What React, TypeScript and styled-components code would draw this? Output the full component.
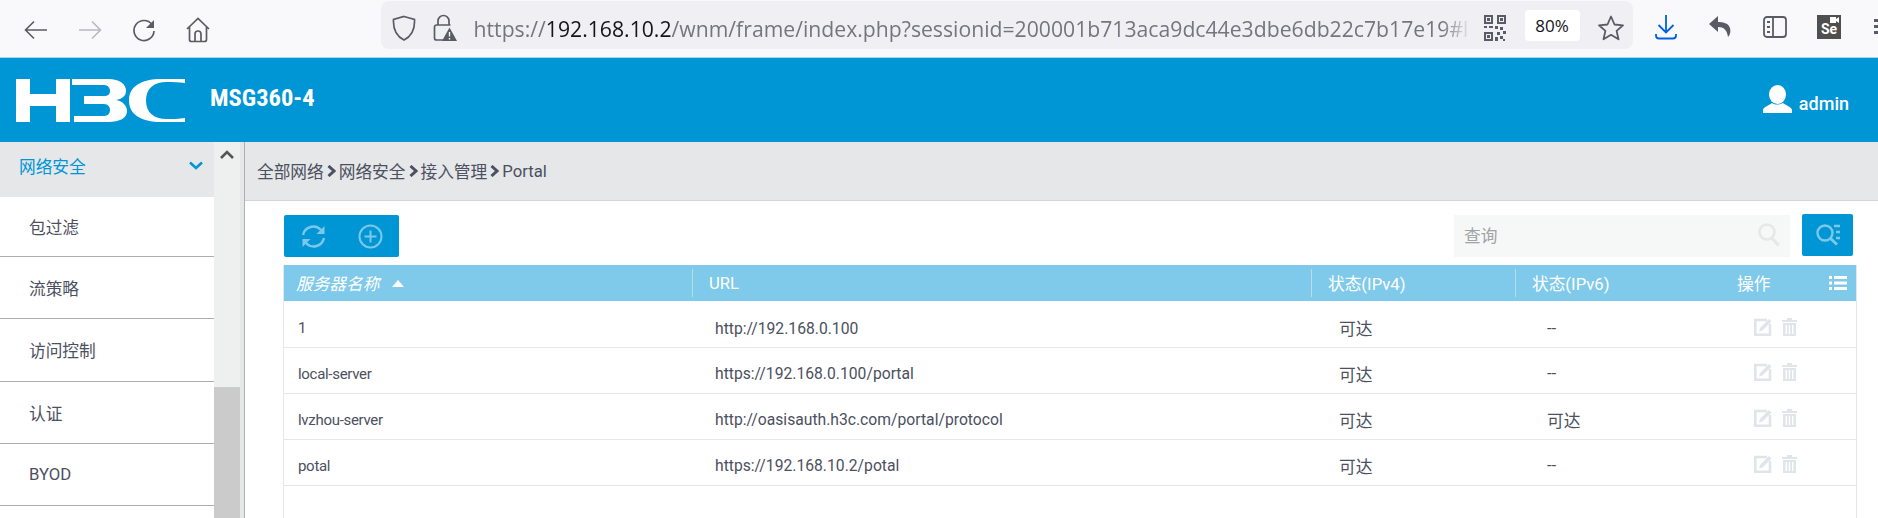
import styled, { createGlobalStyle } from "styled-components";

const GlobalStyle = createGlobalStyle`
  html, body {
    margin: 0;
    padding: 0;
    background: #fff;
    overflow: hidden;
  }
  * {
    box-sizing: border-box;
  }
`;

const uiFont = `"Roboto", "Noto Sans CJK SC", sans-serif`;

const menu = ["包过滤", "流策略", "访问控制", "认证", "BYOD"];
const crumbs = ["全部网络", "网络安全", "接入管理", "Portal"];
const servers = [
  { name: "1", url: "http://192.168.0.100", v4: "可达", v6: "--" },
  { name: "local-server", url: "https://192.168.0.100/portal", v4: "可达", v6: "--" },
  { name: "lvzhou-server", url: "http://oasisauth.h3c.com/portal/protocol", v4: "可达", v6: "可达" },
  { name: "potal", url: "https://192.168.10.2/potal", v4: "可达", v6: "--" },
];

function Logo() {
  return (
    <svg width="169" height="43" viewBox="0 0 169 43" fill="#fff" style={{ flex: "none" }}>
      <path d="M0 0h14v15h26V0h14v43H40V27H14v16H0z" />
      <path d="M56 0h36c12 0 18 5 18 12 0 5-4 8-10 9 6 1 11 5 11 11 0 7-7 11-19 11H58v-6h30c4 0 6-3 6-6s-2-6-6-6H68v-8h20c4 0 6-2 6-5s-2-6-6-6H56z" />
      <path d="M169 0h-23c-22 0-33 8-33 21.500S124 43 146 43h23v-4c-6 1-12 1-18 1-14 0-21-7-21-18.500S137 3 151 3c6 0 12 0 18 1z" />
    </svg>
  );
}

export default function App() {
  return (
    <Page>
      <GlobalStyle />
      <BrowserBar>
        <NavIcons>
          <svg width="24" height="24" viewBox="0 0 24 24" fill="none" stroke="#5b5b66" strokeWidth="1.6">
            <path d="M23 12H2M10 3.500 1.500 12l8.500 8.500" />
          </svg>
          <svg width="24" height="24" viewBox="0 0 24 24" fill="none" stroke="#b9b9bf" strokeWidth="1.600">
            <path d="M1 12h21M14 3.500l8.500 8.500-8.500 8.500" />
          </svg>
          <svg width="24" height="24" viewBox="0 0 24 24" fill="none" stroke="#5b5b66" strokeWidth="1.700">
            <path d="M20 6.500A10 10 0 1 0 22 13" />
            <path d="M22 2v8h-8z" fill="#5b5b66" stroke="none" />
          </svg>
          <svg width="24" height="26" viewBox="0 0 24 26" fill="none" stroke="#5b5b66" strokeWidth="1.700">
            <path d="M1 12 12 1.500 23 12M3.500 10v12.500a2 2 0 0 0 2 2h13a2 2 0 0 0 2-2V10" />
            <path d="M9 24.500V17a3 3 0 0 1 6 0v7.500" />
          </svg>
        </NavIcons>
        <UrlBox>
          <svg width="24" height="26" viewBox="0 0 24 26" fill="none" stroke="#5b5b66" strokeWidth="1.700">
            <path d="M12 1.500 22.500 4.500c.5 9-1.500 16-10.500 20.500C3 20.500 1 13.500 1.500 4.500z" />
          </svg>
          <LockIcon width="24" height="28" viewBox="0 0 24 28" fill="none" stroke="#5b5b66" strokeWidth="1.700">
            <path d="M5 11V7a5.500 5.500 0 0 1 11 0v4M10 26H3.500A2 2 0 0 1 1.500 24V13a2 2 0 0 1 2-2h14" />
            <path d="M16.500 13.500 24 27H9z" fill="#5b5b66" stroke="none" />
            <path d="M16.500 18v4.500M16.500 24v1.500" stroke="#fff" strokeWidth="1.400" />
          </LockIcon>
          <UrlText>
            https://<strong>192.168.10.2</strong>/wnm/frame/index.php?sessionid=200001b713aca9dc44e3dbe6db22c7b17e19#l
          </UrlText>
          <svg width="22" height="26" viewBox="0 0 22 26" fill="#5b5b66">
            <path d="M0 0h9v9H0zm2 2v5h5V2zM13 0h9v9h-9zm2 2v5h5V2zM0 17h9v9H0zm2 2v5h5v-5zM3 3h3v3H3zM16 3h3v3h-3zM3 20h3v3H3zM0 11h3v2H0zm5 0h4v2H5zm6 0h3v3h-3zm5 1h3v3h-3zm3 4h3v3h-3zm-6 1h3v3h-3zm-2 5h3v4h-3zm5-1h3v3h-3zm3 3h2v2h-2z" />
          </svg>
          <ZoomBadge>80%</ZoomBadge>
          <svg width="26" height="26" viewBox="0 0 26 26" fill="none" stroke="#5b5b66" strokeWidth="1.800" strokeLinejoin="round">
            <path d="M13 1.500 16.500 9.500l8.500.8-6.400 5.600 1.900 8.400L13 19.800l-7.500 4.500 1.900-8.400L1 10.300l8.500-.8z" />
          </svg>
        </UrlBox>
        <ToolIcons>
          <svg width="22" height="26" viewBox="0 0 22 26" fill="none" stroke="#0060df" strokeWidth="1.800">
            <path d="M11 1v17M3.500 11l7.500 7.500 7.500-7.500M1 20v1.500a3 3 0 0 0 3 3h14a3 3 0 0 0 3-3V20" />
          </svg>
          <svg width="22" height="24" viewBox="0 0 22 24" fill="#5b5b66">
            <path d="M9 1 0 9l9 8v-5c6 0 9 3 10 10 3-3 3-8 1-11-2-3-6-4-11-4z" />
          </svg>
          <svg width="24" height="22" viewBox="0 0 24 22" fill="none" stroke="#5b5b66" strokeWidth="1.800">
            <rect x="1" y="1" width="22" height="20" rx="3" />
            <path d="M10 1v20M4 6h3M4 11h3M4 16h3" />
          </svg>
          <SeBadge>
            <svg width="9" height="6" viewBox="0 0 9 6" fill="#fff">
              <path d="M0 0h6v6H0zM6 2l3-2v6L6 4z" />
            </svg>
            Se
          </SeBadge>
          <MoreDots />
        </ToolIcons>
      </BrowserBar>

      <Header>
        <Logo />
        <Model>MSG360-4</Model>
        <UserArea>
          <svg width="29" height="28" viewBox="0 0 29 28" fill="#fff">
            <ellipse cx="14.500" cy="9.500" rx="8.500" ry="9.500" />
            <path d="M0 28v-3c0-3 7-5 9-7 3 2 8 2 11 0 2 2 9 4 9 7v3z" />
          </svg>
          <UserName>admin</UserName>
        </UserArea>
      </Header>

      <Main>
        <Sidebar>
          <ActiveItem>
            网络安全
            <svg width="14" height="9" viewBox="0 0 14 9" fill="none" stroke="#0096d6" strokeWidth="2.600">
              <path d="M1 1.500 7 7l6-5.500" />
            </svg>
          </ActiveItem>
          {menu.map((item) => (
            <MenuItem key={item}>{item}</MenuItem>
          ))}
        </Sidebar>
        <ScrollTrack>
          <ScrollArrow width="14" height="9" viewBox="0 0 14 9" fill="none" stroke="#555" strokeWidth="2.600">
            <path d="M1 8 7 2l6 6" />
          </ScrollArrow>
          <ScrollThumb />
        </ScrollTrack>
        <Gutter />

        <Content>
          <Breadcrumb>
            {crumbs.map((crumb, i) => (
              <Crumb key={crumb}>
                {crumb}
                {i < crumbs.length - 1 && (
                  <svg width="9" height="12" viewBox="0 0 9 12" fill="none" stroke="#4c5060" strokeWidth="3">
                    <path d="M1.500 1 7 6l-5.500 5" />
                  </svg>
                )}
              </Crumb>
            ))}
          </Breadcrumb>

          <Toolbar>
            <ButtonGroup>
              <svg width="25" height="25" viewBox="0 0 25 25" fill="none" stroke="#7cc8e8" strokeWidth="2.400">
                <path d="M2 11a10.500 10.500 0 0 1 18-5l2.500 3M23 14a10.500 10.500 0 0 1-18 5l-2.500-3" />
                <path d="M23.500 2v8h-8zM1.500 23v-8h8z" fill="#7cc8e8" stroke="none" />
              </svg>
              <svg width="25" height="25" viewBox="0 0 25 25" fill="none" stroke="#7cc8e8" strokeWidth="2">
                <circle cx="12.500" cy="12.500" r="11" />
                <path d="M12.500 6.500v12M6.500 12.500h12" />
              </svg>
            </ButtonGroup>
            <SearchBox>
              查询
              <svg width="22" height="24" viewBox="0 0 22 24" fill="none" stroke="#e6e8e8" strokeWidth="2.600">
                <circle cx="9" cy="9" r="7.500" />
                <path d="m14 15 6.500 7.500" strokeWidth="3.400" />
              </svg>
            </SearchBox>
            <SearchButton>
              <svg width="24" height="22" viewBox="0 0 24 22" fill="none" stroke="#7cc8e8" strokeWidth="2.400">
                <circle cx="9" cy="9" r="7.500" />
                <path d="m14 14 7 6.500" strokeWidth="3" />
                <path d="M18 2h6M20 8h4M20 14h4" />
              </svg>
            </SearchButton>
          </Toolbar>

          <Table>
            <HeadRow>
              <HeadCell $italic>
                服务器名称
                <svg width="12" height="7" viewBox="0 0 12 7" fill="#fff">
                  <path d="M6 0l6 7H0z" />
                </svg>
              </HeadCell>
              <HeadCell $divider>URL</HeadCell>
              <HeadCell $divider>状态(IPv4)</HeadCell>
              <HeadCell $divider>状态(IPv6)</HeadCell>
              <OpsHead>
                操作
                <svg width="18" height="14" viewBox="0 0 18 14" fill="#fff">
                  <path d="M0 0h3v3H0zM5 0h13v3H5zM0 5.500h3v3H0zM5 5.500h13v3H5zM0 11h3v3H0zM5 11h13v3H5z" />
                </svg>
              </OpsHead>
            </HeadRow>
            {servers.map((server) => (
              <BodyRow key={server.name}>
                <NameCell>{server.name}</NameCell>
                <UrlCell>{server.url}</UrlCell>
                <StatusCell $indent={28}>{server.v4}</StatusCell>
                <StatusCell $indent={32}>{server.v6}</StatusCell>
                <OpsCell>
                  <svg width="18" height="18" viewBox="0 0 18 18" fill="none" stroke="#e1e4e9" strokeWidth="2.600">
                    <path d="M13 2H1.300v14.700H16V6" />
                    <path d="M6 10 15 1l2.500 2.500-9 9-3.500 1z" fill="#e1e4e9" stroke="none" />
                  </svg>
                  <svg width="15" height="18" viewBox="0 0 15 18" fill="#e1e4e9">
                    <path d="M5 0h5v2h5v2H0V2h5zM1 5h13v13H1zm2.500 2v9h1.500V7zm3.200 0v9h1.500V7zm3.300 0v9h1.500V7z" />
                  </svg>
                </OpsCell>
              </BodyRow>
            ))}
          </Table>
        </Content>
      </Main>
    </Page>
  );
}

const Page = styled.div`
  width: 1878px;
  height: 518px;
  display: flex;
  flex-direction: column;
  overflow: hidden;
  font-family: ${uiFont};
  color: #4c5060;
`;

const BrowserBar = styled.div`
  height: 58px;
  background: #f9f9fb;
  border-bottom: 1px solid #a9d6ea;
  display: flex;
  align-items: center;
`;

const NavIcons = styled.div`
  width: 381px;
  padding: 2px 0 0 24px;
  display: flex;
  align-items: center;
  gap: 30px;
`;

const UrlBox = styled.div`
  width: 1254px;
  height: 48px;
  margin-top: -7px;
  padding: 6px 0 0 11px;
  background: #f0f0f4;
  border-radius: 8px;
  display: flex;
  align-items: center;
`;

const LockIcon = styled.svg`
  margin-left: 17px;
`;

const UrlText = styled.div`
  width: 998px;
  flex: none;
  margin: 0 12px 0 17px;
  font-family: "Open Sans", sans-serif;
  font-size: 21.2px;
  color: #75757f;
  white-space: nowrap;
  overflow: hidden;
  mask-image: linear-gradient(to right, #000 97%, transparent);

  strong {
    font-weight: 400;
    color: #15141a;
  }
`;

const ZoomBadge = styled.div`
  width: 55px;
  height: 31px;
  margin: -6px 18px 0 19px;
  background: #fff;
  border-radius: 4px;
  display: flex;
  align-items: center;
  justify-content: center;
  font-family: "Open Sans", sans-serif;
  font-size: 17px;
  color: #15141a;
`;

const ToolIcons = styled.div`
  padding: 0 0 0 22px;
  margin-top: -4px;
  display: flex;
  align-items: center;
  gap: 32px;
`;

const SeBadge = styled.div`
  width: 24px;
  height: 24px;
  margin-left: -2px;
  padding-top: 2px;
  background: #4f4f4f;
  color: #fff;
  font-size: 14px;
  font-weight: 700;
  line-height: 13px;
  display: flex;
  flex-direction: column;
  align-items: center;

  svg {
    align-self: flex-end;
    margin-right: 2px;
  }
`;

const MoreDots = styled.div`
  width: 4px;
  height: 3px;
  margin-left: 1px;
  background: #5b5b66;
  box-shadow: 0 -6px 0 #5b5b66, 0 6px 0 #5b5b66;
`;

const Header = styled.div`
  height: 84px;
  padding: 0 29px 0 16px;
  background: #0096d6;
  display: flex;
  align-items: center;
`;

const Model = styled.div`
  margin: -6px 0 0 25px;
  font-family: "Roboto Condensed", "Liberation Sans Narrow", ${uiFont};
  font-size: 24.5px;
  font-weight: 700;
  color: #fff;
`;

const UserArea = styled.div`
  margin: -2px 0 0 auto;
  display: flex;
  align-items: center;
  gap: 7px;
`;

const UserName = styled.span`
  margin-top: 8px;
  font-size: 18px;
  font-weight: 500;
  color: #fff;
`;

const Main = styled.div`
  flex: 1;
  min-height: 0;
  display: flex;
`;

const Sidebar = styled.div`
  width: 214px;
  flex: none;
  display: flex;
  flex-direction: column;
`;

const ActiveItem = styled.div`
  height: 55px;
  flex: none;
  padding: 0 11px 8px 19px;
  background: #e5e7e9;
  color: #0096d6;
  font-size: 16.7px;
  display: flex;
  align-items: center;
  justify-content: space-between;
`;

const MenuItem = styled.div`
  height: 62px;
  flex: none;
  padding-left: 29px;
  border-bottom: 1px solid #aeaeae;
  font-size: 16.7px;
  display: flex;
  align-items: center;

  &:nth-child(2) {
    height: 60px;
  }
  &:nth-child(4) {
    height: 63px;
  }
`;

const ScrollTrack = styled.div`
  width: 26px;
  flex: none;
  padding-top: 8px;
  background: #eeefef;
  display: flex;
  flex-direction: column;
  align-items: center;
`;

const ScrollArrow = styled.svg`
  flex: none;
`;

const ScrollThumb = styled.div`
  align-self: stretch;
  flex: 1;
  margin-top: 228px;
  background: #cbcbcb;
`;

const Gutter = styled.div`
  width: 5px;
  flex: none;
  background: #e5e7e9;
  border-right: 1px solid #aeb0b2;
`;

const Content = styled.div`
  flex: 1;
  min-width: 0;
  display: flex;
  flex-direction: column;
`;

const Breadcrumb = styled.div`
  height: 59px;
  flex: none;
  padding-left: 12px;
  background: #e5e7e9;
  border-bottom: 1px solid #d2d4d6;
  display: flex;
  align-items: center;
  gap: 3px;
  font-size: 16.7px;
`;

const Crumb = styled.span`
  display: flex;
  align-items: center;
  gap: 3px;
`;

const Toolbar = styled.div`
  height: 64px;
  flex: none;
  padding: 14px 25px 0 39px;
  display: flex;
  align-items: flex-start;
`;

const ButtonGroup = styled.div`
  width: 115px;
  height: 42px;
  padding: 0 16px 0 17px;
  background: #0096d6;
  border-radius: 2px;
  display: flex;
  align-items: center;
  justify-content: space-between;
`;

const SearchBox = styled.div`
  width: 336px;
  height: 42px;
  margin: 0 12px 0 auto;
  padding: 0 10px 2px;
  background: #f6f7f7;
  color: #a0a2a4;
  font-size: 16.7px;
  display: flex;
  align-items: center;
  justify-content: space-between;
`;

const SearchButton = styled.div`
  width: 51px;
  height: 42px;
  margin-top: -1px;
  background: #0096d6;
  border-radius: 2px;
  display: flex;
  align-items: center;
  justify-content: center;
`;

const Table = styled.div`
  flex: 1;
  margin: 0 21px 0 38px;
  border-left: 1px solid #e5e7e9;
  border-right: 1px solid #e5e7e9;
`;

const columns = `408px 619px 204px 202px 1fr`;

const HeadRow = styled.div`
  height: 36px;
  background: #7fc9ea;
  color: #fff;
  font-size: 16.7px;
  display: grid;
  grid-template-columns: ${columns};
  align-items: center;
`;

const HeadCell = styled.div<{ $italic?: boolean; $divider?: boolean }>`
  height: 28px;
  padding-left: ${(props) => (props.$divider ? "16px" : "12px")};
  border-left: ${(props) => (props.$divider ? "1px solid #b9dcec" : "none")};
  font-style: ${(props) => (props.$italic ? "italic" : "normal")};
  display: flex;
  align-items: center;
  gap: 13px;
`;

const OpsHead = styled.div`
  padding: 0 9px 0 20px;
  display: flex;
  align-items: center;
  justify-content: space-between;
`;

const BodyRow = styled.div`
  height: 46px;
  padding-top: 6px;
  border-bottom: 1px solid #e5e7e9;
  font-size: 15.7px;
  display: grid;
  grid-template-columns: ${columns};
  align-items: center;

  &:nth-of-type(2) {
    height: 47px;
    padding-top: 8px;
  }
`;

const NameCell = styled.div`
  padding-left: 14px;
  font-size: 15px;
  letter-spacing: -0.3px;
`;

const UrlCell = styled.div`
  padding-left: 23px;
`;

const StatusCell = styled.div<{ $indent: number }>`
  padding-left: ${(props) => props.$indent}px;
  font-size: 16.7px;
`;

const OpsCell = styled.div`
  padding: 0 0 3px 37px;
  display: flex;
  align-items: center;
  gap: 10px;
`;
